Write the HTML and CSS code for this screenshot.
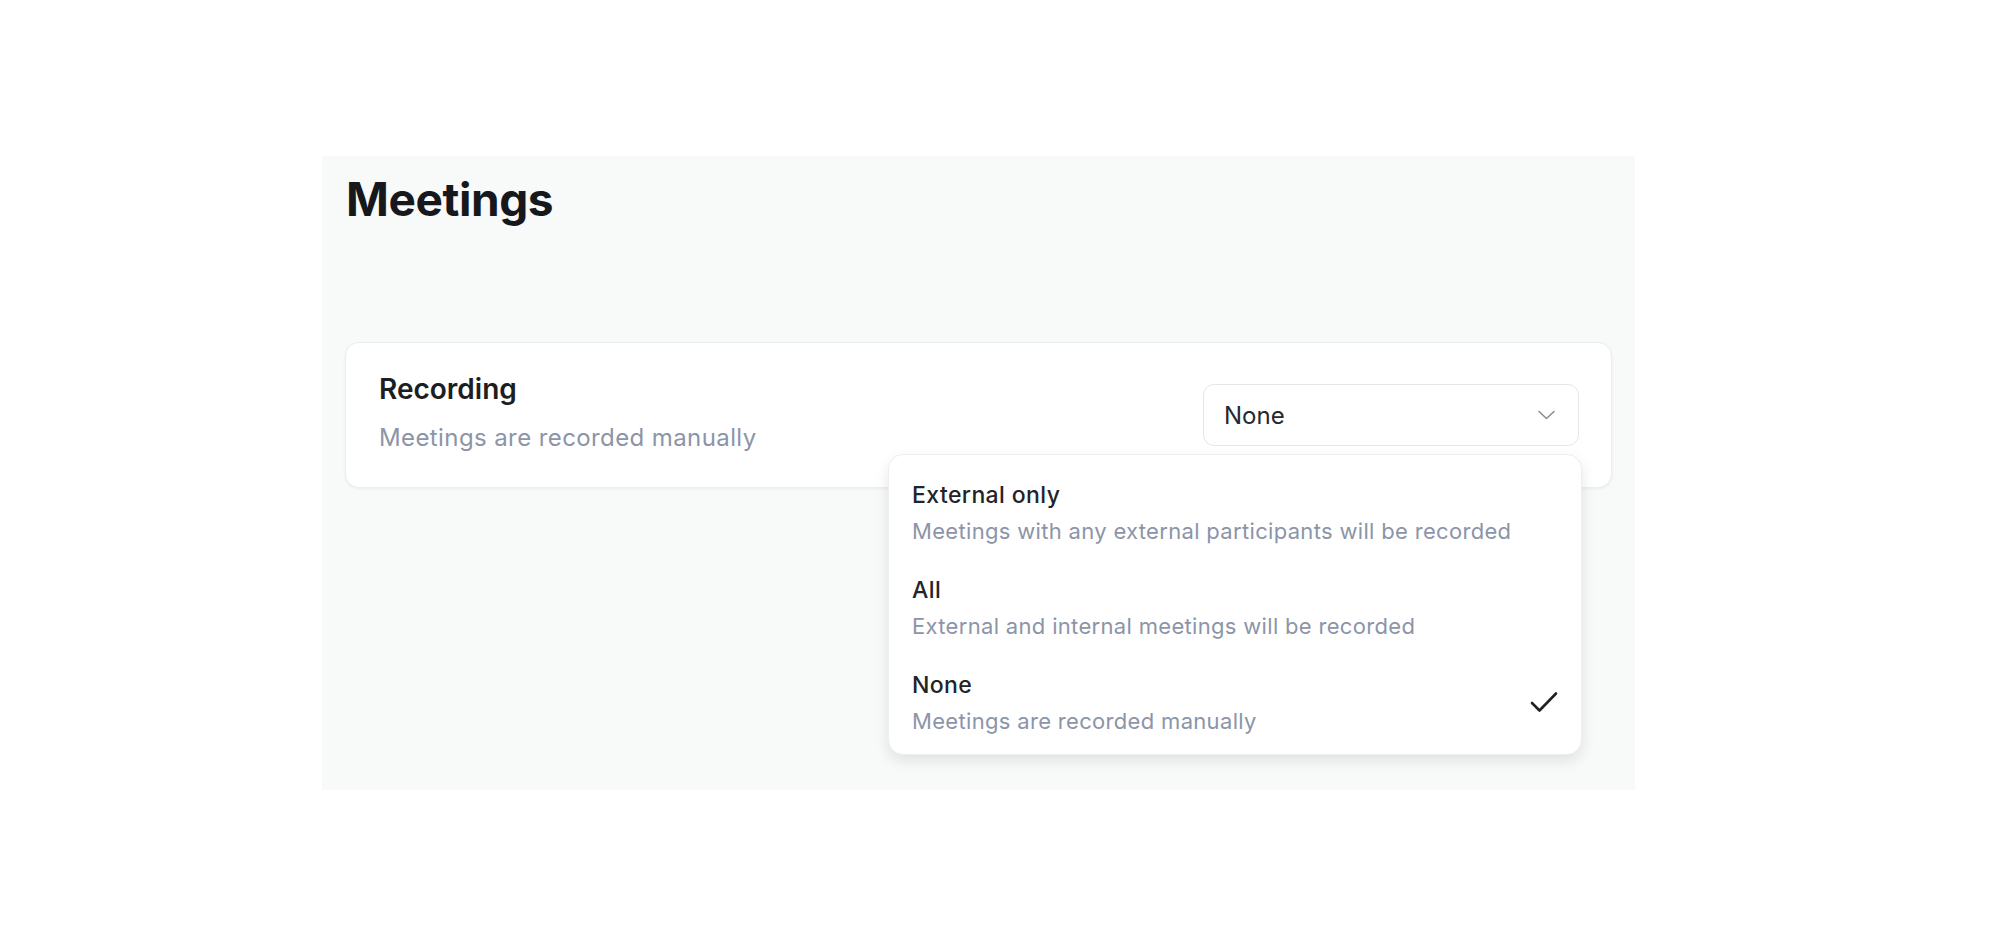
FILE: index.html
```html
<!DOCTYPE html>
<html lang="en">
<head>
<meta charset="UTF-8">
<title>Meetings</title>
<link rel="stylesheet" href="styles.css">
</head>
<body>

<div class="panel">
  <h1 class="page-title">Meetings</h1>

  <div class="card">
    <div class="setting-text">
      <div class="setting-title">Recording</div>
      <div class="setting-desc">Meetings are recorded manually</div>
    </div>

    <div class="select-wrap">
      <div class="select">
        <span>None</span>
        <svg class="chevron" width="17" height="10" viewBox="0 0 17 10"><path d="M1 1.5 L8.5 8.5 L16 1.5" fill="none" stroke="#8a8d93" stroke-width="1.6" stroke-linecap="round" stroke-linejoin="round"/></svg>
      </div>

      <div class="menu">
        <div class="option">
          <div>
            <div class="option-title">External only</div>
            <div class="option-desc">Meetings with any external participants will be recorded</div>
          </div>
        </div>
        <div class="option">
          <div>
            <div class="option-title">All</div>
            <div class="option-desc">External and internal meetings will be recorded</div>
          </div>
        </div>
        <div class="option selected">
          <div>
            <div class="option-title">None</div>
            <div class="option-desc">Meetings are recorded manually</div>
          </div>
          <svg class="check" width="28" height="22" viewBox="0 0 28 22"><path d="M2 12 L9.5 19.5 L26 2.5" fill="none" stroke="#1f2125" stroke-width="2.6" stroke-linecap="round" stroke-linejoin="round"/></svg>
        </div>
      </div>
    </div>
  </div>
</div>

</body>
</html>
```

FILE: styles.css
```css
* { box-sizing: border-box; margin: 0; padding: 0; font-family: Inter, "Noto Sans", sans-serif; }
body { background: #fff; }
.panel { margin: 156px 0 0 322px; width: 1313px; height: 634px; background: #f8f9f9; padding: 15px 23px; }
.page-title { font-size: 46px; line-height: 56px; font-weight: 700; color: #16181c; letter-spacing: -0.4px; margin-left: 1px; margin-bottom: 115px; }
.card { display: flex; justify-content: space-between; align-items: center; background: #fff; border: 1px solid #eceef0; border-radius: 14px; padding: 30px 32px 33px 33px; box-shadow: 0 1px 3px rgba(20, 24, 32, 0.06); }
.setting-title { font-size: 28px; line-height: 32px; font-weight: 600; color: #1c1e22; }
.setting-desc { font-size: 24px; line-height: 32px; color: #8c94a8; margin-top: 17px; letter-spacing: 0.4px; }
.select-wrap { position: relative; margin-top: 3px; }
.select { width: 376px; height: 62px; display: flex; align-items: center; justify-content: space-between; border: 1px solid #e4e6e9; border-radius: 11px; padding: 0 23px 0 20px; font-size: 24px; color: #26282c; background: #fff; }
.chevron { display: block; }
.menu { position: absolute; top: 70px; right: -3px; width: 694px; background: #fff; border: 1px solid #eceef0; border-radius: 15px; padding: 8px 0 6px; box-shadow: 0 6px 14px rgba(20, 24, 32, 0.10); z-index: 2; }
.option { display: flex; justify-content: space-between; align-items: center; padding: 16px 23px 11px 23px; }
.option-title { font-size: 23px; line-height: 32px; font-weight: 500; color: #222428; letter-spacing: 0.4px; }
.option-desc { font-size: 22px; line-height: 32px; color: #8c94a8; margin-top: 4px; letter-spacing: 0.32px; }
.check { display: block; margin-top: -2px; }
```
